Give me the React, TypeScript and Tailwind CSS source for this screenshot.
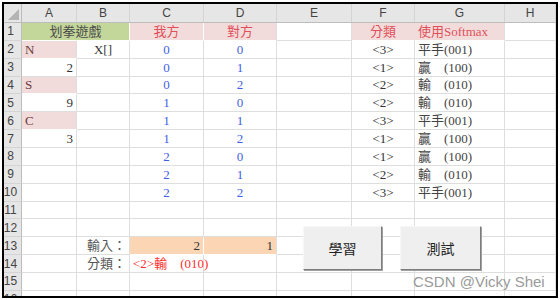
type Cell = {
  t?: string;
  a?: "l" | "c" | "r";
  tc?: string;
  fill?: string;
  span?: boolean;
};

const COLS = "grid grid-cols-[18px_55px_53px_74px_73px_75px_63px_90px_51px]";
const LETTERS = ["A", "B", "C", "D", "E", "F", "G", "H"];

const blue = "text-[#3f5fe6]";
const red = "text-[#e0505a]";
const pinkNote = "bg-[#f2dcdb] border-r-[#dedede] border-b-white";
const cls = (v: string): Cell => ({ t: v, a: "c", tc: "text-[#333]" });
const out = (v: string): Cell => ({ t: v, a: "l", tc: "text-[#444]" });

const rows: Cell[][] = [
  [
    { t: "划拳遊戲", a: "c", tc: "text-[#4a4a4a]", fill: "bg-[#c4d79b] border-white", span: true },
    { t: "我方", a: "c", tc: red, fill: "bg-[#f2dcdb] border-white" },
    { t: "對方", a: "c", tc: red, fill: "bg-[#f2dcdb] border-r-[#dedede] border-b-white" },
    {},
    { t: "分類", a: "c", tc: red, fill: "bg-[#f2dcdb] border-r-[#f2dcdb] border-b-white" },
    { t: "使用Softmax", a: "l", tc: red, fill: "bg-[#f2dcdb] border-r-[#dedede] border-b-white" },
    {},
  ],
  [{ t: "N", a: "l", tc: "text-[#6b3b3b]", fill: pinkNote }, { t: "X[]", a: "c" }, { t: "0", a: "c", tc: blue }, { t: "0", a: "c", tc: blue }, {}, cls("<3>"), out("平手(001)"), {}],
  [{ t: "2", a: "r" }, {}, { t: "0", a: "c", tc: blue }, { t: "1", a: "c", tc: blue }, {}, cls("<1>"), out("贏\u3000(100)"), {}],
  [{ t: "S", a: "l", tc: "text-[#6b3b3b]", fill: pinkNote }, {}, { t: "0", a: "c", tc: blue }, { t: "2", a: "c", tc: blue }, {}, cls("<2>"), out("輸\u3000(010)"), {}],
  [{ t: "9", a: "r" }, {}, { t: "1", a: "c", tc: blue }, { t: "0", a: "c", tc: blue }, {}, cls("<2>"), out("輸\u3000(010)"), {}],
  [{ t: "C", a: "l", tc: "text-[#6b3b3b]", fill: pinkNote }, {}, { t: "1", a: "c", tc: blue }, { t: "1", a: "c", tc: blue }, {}, cls("<3>"), out("平手(001)"), {}],
  [{ t: "3", a: "r" }, {}, { t: "1", a: "c", tc: blue }, { t: "2", a: "c", tc: blue }, {}, cls("<1>"), out("贏\u3000(100)"), {}],
  [{}, {}, { t: "2", a: "c", tc: blue }, { t: "0", a: "c", tc: blue }, {}, cls("<1>"), out("贏\u3000(100)"), {}],
  [{}, {}, { t: "2", a: "c", tc: blue }, { t: "1", a: "c", tc: blue }, {}, cls("<2>"), out("輸\u3000(010)"), {}],
  [{}, {}, { t: "2", a: "c", tc: blue }, { t: "2", a: "c", tc: blue }, {}, cls("<3>"), out("平手(001)"), {}],
  [{}, {}, {}, {}, {}, {}, {}, {}],
  [{}, {}, {}, {}, {}, {}, {}, {}],
  [
    {},
    { t: "輸入：", a: "r", tc: "text-[#555]" },
    { t: "2", a: "r", fill: "bg-[#fcd5b4] border-white" },
    { t: "1", a: "r", fill: "bg-[#fcd5b4] border-r-[#dedede] border-b-white" },
    {}, {}, {}, {},
  ],
  [{}, { t: "分類：", a: "r", tc: "text-[#555]" }, { t: "<2>輸\u3000(010)", a: "l", tc: "text-[#ff3030]" }, {}, {}, {}, {}, {}],
  [{}, {}, {}, {}, {}, {}, {}, {}],
  [{}, {}, {}, {}, {}, {}, {}, {}],
];

function GridCell({ c }: { c: Cell }) {
  const align = c.a === "r" ? "justify-end" : c.a === "c" ? "justify-center" : "justify-start";
  return (
    <div
      className={`flex items-end pb-[1px] px-[3px] border-r border-b overflow-visible whitespace-pre text-[13px] leading-[15px] ${align} ${
        c.fill ?? "border-[#dedede]"
      } ${c.tc ?? "text-[#333]"} ${c.span ? "col-span-2" : ""}`}
    >
      {c.t}
    </div>
  );
}

export default function App() {
  return (
    <div className="w-[560px] h-[300px] bg-white pl-[2px] pt-[2px]">
      <div className="relative w-[556px] h-[296px] border-2 border-black overflow-hidden font-['Liberation_Serif','Noto_Sans_CJK_TC',serif]">
        {/* column headers */}
        <div className={`${COLS} h-[19px] bg-[#e6e6e6] border-b border-[#bdbdbd]`}>
          <div className="relative border-r border-[#bdbdbd]">
            <svg className="absolute right-[2px] bottom-[2px]" width="11" height="11" viewBox="0 0 11 11">
              <polygon points="11,0 11,11 0,11" fill="#b4b4b4" />
            </svg>
          </div>
          {LETTERS.map((l) => (
            <div
              key={l}
              className="flex items-center justify-center border-r border-[#d4d4d4] text-[12px] text-[#444] font-['Liberation_Sans',sans-serif]"
            >
              {l}
            </div>
          ))}
        </div>

        {/* rows */}
        {rows.map((r, i) => (
          <div key={i} className={`${COLS} h-[17.86px] bg-white`}>
            <div className="flex items-center justify-center pr-[4px] bg-[#e6e6e6] border-r border-b border-r-[#bdbdbd] border-b-[#d4d4d4] text-[12px] leading-[14px] text-[#444] font-['Liberation_Sans',sans-serif]">
              {i + 1}
            </div>
            {r.map((c, j) => (
              <GridCell key={j} c={c} />
            ))}
          </div>
        ))}

        {/* form buttons */}
        <button className="absolute left-[299px] top-[222px] w-[79px] h-[44px] bg-[#efefef] border border-t-[#f7f7f7] border-l-[#f7f7f7] border-r-[#7d7d7d] border-b-[#7d7d7d] shadow-[1px_1px_0_#a0a0a0] text-[14px] text-[#222] font-['Noto_Sans_CJK_TC',sans-serif]">
          學習
        </button>
        <button className="absolute left-[396px] top-[222px] w-[81px] h-[44px] bg-[#efefef] border border-t-[#f7f7f7] border-l-[#f7f7f7] border-r-[#7d7d7d] border-b-[#7d7d7d] shadow-[1px_1px_0_#a0a0a0] text-[14px] text-[#222] font-['Noto_Sans_CJK_TC',sans-serif]">
          測試
        </button>

        {/* watermark */}
        <div className="absolute left-[409px] top-[270px] text-[15px] leading-[15px] text-[#9a9a9a] font-['Liberation_Sans',sans-serif] whitespace-nowrap">
          CSDN @Vicky Shei
        </div>
      </div>
    </div>
  );
}
